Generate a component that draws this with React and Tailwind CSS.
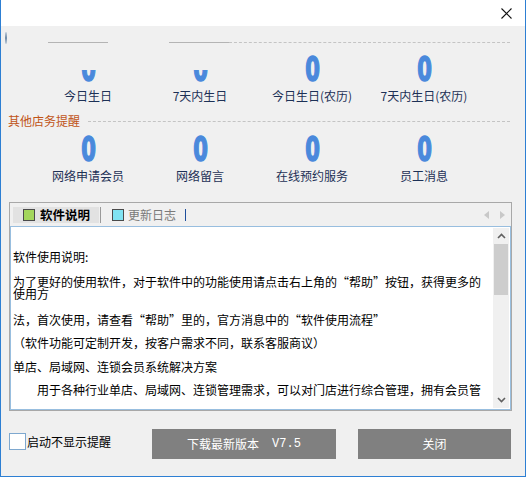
const cjk = "font-['Noto_Sans_CJK_SC','Noto_Sans',sans-serif]"

const Zero = () => (
  <span className="block h-[25px] shrink-0 scale-x-[0.64] text-center font-['DejaVu_Sans',sans-serif] text-[33px] font-bold leading-[25px] text-[#4a89dc] [-webkit-text-stroke:1.6px_#4a89dc]">
    0
  </span>
)

const Stat = ({ label, clipped }) => (
  <div className="flex flex-col items-center">
    <div className="flex h-[25px] w-full flex-col items-center justify-end">
      {clipped ? (
        <div className="flex h-[12px] flex-col justify-end overflow-hidden">
          <Zero />
        </div>
      ) : (
        <Zero />
      )}
    </div>
    <div className={`mt-[7px] whitespace-nowrap text-[12px] leading-[14px] text-[#1d3156] ${cjk}`}>{label}</div>
  </div>
)

const Chevron = ({ up }) => (
  <svg width="9" height="6" viewBox="0 0 9 6">
    <polyline
      points={up ? '1,5 4.5,1.5 8,5' : '1,1 4.5,4.5 8,1'}
      fill="none"
      stroke="#606060"
      strokeWidth="1.6"
    />
  </svg>
)

export default function App() {
  return (
    <div className={`flex h-[477px] w-[526px] flex-col border-x border-b border-[#2d7fd3] bg-[#f0f0f0] ${cjk}`}>
      {/* title bar */}
      <div className="flex h-[26px] shrink-0 items-start justify-end bg-white pr-[13px] pt-[8px]">
        <svg width="11" height="11" viewBox="0 0 11 11">
          <path d="M0.5 0.5 L10.5 10.5 M10.5 0.5 L0.5 10.5" stroke="#111" strokeWidth="1.1" />
        </svg>
      </div>

      {/* top strip */}
      <div className="flex h-[31px] shrink-0 items-start">
        <div className="ml-[4px] mt-[6px] h-[12px] w-[2px] rounded-sm bg-gradient-to-b from-[#c9d3de] via-[#6f8aa6] to-[#c9d3de]" />
        <div className="ml-[41px] mt-[16px] h-px w-[60px] bg-[#b4b4b4]" />
        <div className="ml-[61px] mt-[16px] h-px w-[60px] bg-[#b4b4b4]" />
        <div className="mr-[15px] mt-[16px] flex-1 border-t border-dashed border-[#c4c4c4]" />
      </div>

      {/* birthdays */}
      <div className="grid grid-cols-[repeat(4,112px)] pl-[31px]">
        <Stat label="今日生日" clipped />
        <Stat label="7天内生日" clipped />
        <Stat label="今日生日(农历)" />
        <Stat label="7天内生日(农历)" />
      </div>

      {/* other reminders */}
      <div className="mt-[11px] flex items-center pl-[7px]">
        <span className="text-[12px] leading-[14px] text-[#c05417]">其他店务提醒</span>
        <div className="ml-[8px] mr-[15px] flex-1 border-t border-dashed border-[#c4c4c4]" />
      </div>

      <div className="mt-[9px] grid grid-cols-[repeat(4,112px)] pl-[31px]">
        <Stat label="网络申请会员" />
        <Stat label="网络留言" />
        <Stat label="在线预约服务" />
        <Stat label="员工消息" />
      </div>

      {/* tabs panel */}
      <div className="ml-[8px] mt-[19px] flex h-[209px] w-[503px] shrink-0 flex-col border border-[#a8a8a8]">
        <div className="flex h-[23px] shrink-0 items-center">
          <div className="ml-[3px] flex h-[16px] w-[86px] items-center bg-[#e2e2e2] pl-[10px]">
            <span className="h-[12px] w-[12px] border border-[#4a4a4a] bg-[#a3d65c]" />
            <span className="ml-[5px] text-[12.5px] font-bold leading-[14px] text-black">软件说明</span>
          </div>
          <div className="ml-[1px] h-[16px] w-px bg-[#9a9a9a]" />
          <span className="ml-[11px] h-[12px] w-[12px] border border-[#4a4a4a] bg-[#80e3f2]" />
          <span className="ml-[4px] text-[12px] leading-[14px] text-[#7a7a7a]">更新日志</span>
          <div className="ml-[9px] h-[12px] w-px bg-[#1e4f9c]" />
          <div className="ml-auto mr-[6px] flex items-center gap-[11px]">
            <svg width="5" height="8" viewBox="0 0 5 8"><path d="M5 0 L0 4 L5 8 Z" fill="#c8c8c8" /></svg>
            <svg width="5" height="8" viewBox="0 0 5 8"><path d="M0 0 L5 4 L0 8 Z" fill="#c8c8c8" /></svg>
          </div>
        </div>
        <div className="flex min-h-0 flex-1 border border-[#98bedf] bg-white">
          <div className="flex-1 overflow-hidden pl-[2px] pt-[24px] text-[12px] leading-[12px] text-black">
            <p className="mb-[13px] whitespace-nowrap">软件使用说明:</p>
            <p className="mb-[14px] whitespace-nowrap">
              为了更好的使用软件，对于软件中的功能使用请点击右上角的“帮助”按钮，获得更多的
              <br />
              使用方
            </p>
            <p className="mb-[11px] whitespace-nowrap">法，首次使用，请查看“帮助”里的，官方消息中的“软件使用流程”</p>
            <p className="mb-[12px] whitespace-nowrap">（软件功能可定制开发，按客户需求不同，联系客服商议）</p>
            <p className="mb-[11px] whitespace-nowrap">单店、局域网、连锁会员系统解决方案</p>
            <p className="whitespace-nowrap pl-[24px]">用于各种行业单店、局域网、连锁管理需求，可以对门店进行综合管理，拥有会员管</p>
          </div>
          <div className="my-[1px] mr-[1px] flex w-[16px] flex-col bg-[#f0f0f0]">
            <div className="flex h-[16px] items-center justify-center">
              <Chevron up />
            </div>
            <div className="mx-[1px] h-[51px] bg-[#cdcdcd]" />
            <div className="flex-1" />
            <div className="flex h-[16px] items-center justify-center">
              <Chevron />
            </div>
          </div>
        </div>
      </div>

      {/* footer */}
      <div className="mt-[18px] flex items-start">
        <div className="ml-[8px] mt-[4px] flex items-center">
          <span className="h-[17px] w-[17px] border border-[#7ea8cf] bg-white" />
          <span className="ml-[1px] text-[12px] leading-[14px] text-black">启动不显示提醒</span>
        </div>
        <div className="ml-[41px] flex h-[30px] w-[184px] items-center justify-center bg-[#808080] text-[12px] text-white">
          <span>下载最新版本</span>
          <span className="ml-[13px] font-['Liberation_Mono',monospace]">V7.5</span>
        </div>
        <div className="ml-[22px] flex h-[30px] w-[153px] items-center justify-center bg-[#808080] text-[12px] text-white">
          关闭
        </div>
      </div>
    </div>
  )
}
